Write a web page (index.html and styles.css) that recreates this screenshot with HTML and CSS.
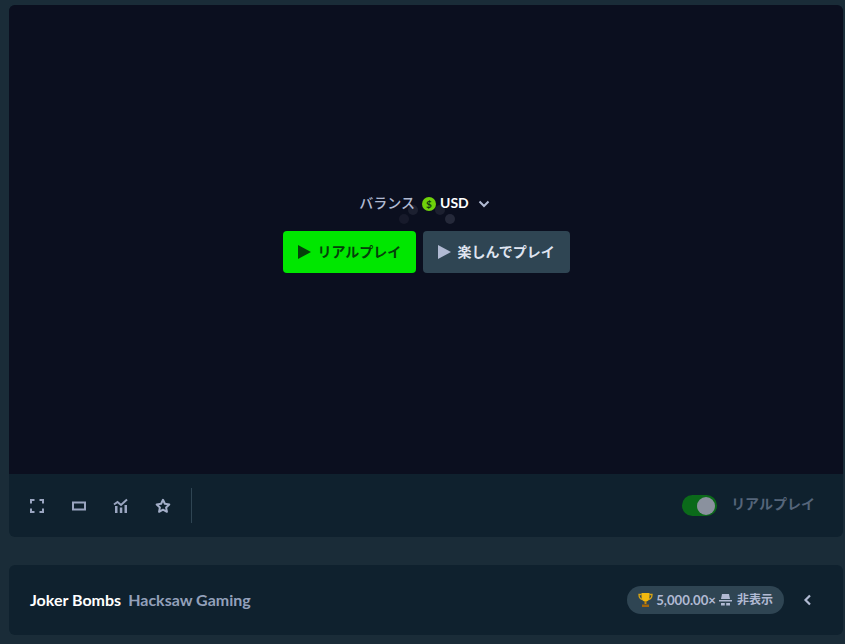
FILE: index.html
```html
<!DOCTYPE html>
<html lang="ja">
<head>
    <title>Joker Bombs</title>
    <link rel="stylesheet" href="styles.css">
</head>
<body>
    <div class="game-card">
        <div class="screen">
            <div class="spinner">
                <span class="dot dot-1"></span>
                <span class="dot dot-2"></span>
                <span class="dot dot-3"></span>
                <span class="dot dot-4"></span>
            </div>
            <div class="balance">
                <span class="balance-label">バランス</span>
                <span class="coin">$</span>
                <span class="currency">USD</span>
                <svg class="chevron" width="12" height="12" viewBox="0 0 12 12"><path d="M1.500 3.500L6 8l4.500-4.500" fill="none" stroke="#b1bad3" stroke-width="2"/></svg>
            </div>
            <div class="play-buttons">
                <button class="btn btn-real"><span class="tri tri-real"></span><span class="btn-text">リアルプレイ</span></button>
                <button class="btn btn-fun"><span class="tri tri-fun"></span><span class="btn-text">楽しんでプレイ</span></button>
            </div>
        </div>
        <div class="toolbar">
            <div class="tools">
                <svg class="tool" width="16" height="16" viewBox="0 0 16 16"><path d="M2 5.500V2h3.500M10.500 2H14v3.500M14 10.500V14h-3.500M5.500 14H2v-3.500" fill="none" stroke="#9aa5c0" stroke-width="2"/></svg>
                <svg class="tool" width="16" height="16" viewBox="0 0 16 16"><rect x="2" y="4.500" width="12" height="7" fill="none" stroke="#9aa5c0" stroke-width="2"/></svg>
                <svg class="tool" width="16" height="16" viewBox="0 0 16 16"><path d="M1 6.500l3.500-2.500 3.500 3 6-5.500" fill="none" stroke="#9aa5c0" stroke-width="2"/><path d="M2 8h2.500v7H2zM6.800 9.500h2.500V15H6.800zM11.500 7h2.500v8h-2.500z" fill="#9aa5c0"/></svg>
                <svg class="tool" width="16" height="16" viewBox="0 0 16 16"><path d="M8 1.800l1.900 4 4.400.6-3.200 3 .8 4.400L8 11.700l-3.900 2.100.8-4.400-3.200-3 4.400-.6z" fill="none" stroke="#a3aec8" stroke-width="2" stroke-linejoin="round"/></svg>
                <span class="divider"></span>
            </div>
            <div class="mode">
                <span class="switch"><span class="knob"></span></span>
                <span class="mode-label">リアルプレイ</span>
            </div>
        </div>
    </div>

    <div class="info-card">
        <div class="titles">
            <span class="game-name">Joker Bombs</span>
            <span class="provider">Hacksaw Gaming</span>
        </div>
        <div class="info-right">
            <div class="pill">
                <svg width="15" height="16" viewBox="0 0 15 16"><path d="M3.500 2.500H1c0 3 1 4.500 3.500 5M11.500 2.500H14c0 3-1 4.500-3.500 5" fill="none" stroke="#d9a514" stroke-width="1.300"/><path d="M3.500 1h8v4c0 3-1.800 4.500-4 4.500S3.500 8 3.500 5z" fill="#f2b90f"/><path d="M6.500 9h2v3h-2z" fill="#c98a0a"/><path d="M4 12.500h7V15H4z" fill="#a5660a"/></svg>
                <span class="multiplier">5,000.00×</span>
                <svg class="hat" width="13" height="12" viewBox="0 0 13 12"><path d="M3 0h7l1 5H2z" fill="#b1bad3"/><path d="M0 6h13v1.500H0z" fill="#b1bad3"/><path d="M2 9h3.800v2.500H2zM7.200 9H11v2.500H7.200z" fill="#b1bad3"/></svg>
                <span class="hidden-label">非表示</span>
            </div>
            <svg class="back" width="12" height="12" viewBox="0 0 12 12"><path d="M8 1.500L3.500 6 8 10.500" fill="none" stroke="#b1bad3" stroke-width="2.200"/></svg>
        </div>
    </div>
</body>
</html>
```

FILE: styles.css
```css
html, body {
    height: 100%;
}
body {
    margin: 0;
    padding: 5px 2px 0 9px;
    box-sizing: border-box;
    overflow: hidden;
    background-color: #1a2c38;
    font-family: Lato, "Noto Sans CJK JP", sans-serif;
    font-weight: 700;
}
.game-card {
    border-radius: 6px;
    overflow: hidden;
    background-color: #0f212e;
}
.screen {
    position: relative;
    height: 469px;
    background-color: #0b0f1f;
    display: flex;
    flex-direction: column;
    align-items: center;
    padding-top: 187px;
    box-sizing: border-box;
}
.spinner {
    position: absolute;
    left: 390px;
    top: 200px;
    width: 60px;
    height: 24px;
}
.dot {
    position: absolute;
    width: 10px;
    height: 10px;
    border-radius: 50%;
    background-color: #1c2030;
}
.dot-1 { left: 0; top: 9px; opacity: .7; }
.dot-2 { left: 9px; top: 0; }
.dot-3 { left: 36px; top: 0; }
.dot-4 { left: 46px; top: 9px; background-color: #25293a; }
.balance {
    position: relative;
    left: -1.500px;
    display: flex;
    align-items: center;
    height: 20px;
    font-size: 14px;
    color: #fff;
}
.balance-label {
    color: #b1bad3;
    font-weight: 500;
    font-size: 14px;
    margin-right: 7px;
}
.coin {
    width: 14px;
    height: 14px;
    margin-top: 3px;
    border-radius: 50%;
    background-color: #6fd20a;
    color: #0f3d10;
    font-size: 10px;
    line-height: 14px;
    text-align: center;
    margin-right: 4px;
}
.chevron {
    margin-left: 9px;
    margin-top: 3px;
}
.play-buttons {
    position: relative;
    display: flex;
    gap: 7px;
    margin-top: 19px;
}
.btn {
    display: flex;
    align-items: center;
    height: 42px;
    padding: 0;
    border: none;
    border-radius: 4px;
    font-family: inherit;
    font-weight: 600;
    font-size: 14px;
}
.btn-text {
    margin-top: -2px;
}
.btn-real {
    width: 133px;
    padding-left: 15px;
    background-color: #00e700;
    color: #05400a;
}
.btn-fun {
    width: 147px;
    padding-left: 15px;
    background-color: #2f4553;
    color: #dfe4f0;
}
.tri {
    width: 0;
    height: 0;
    margin-right: 7px;
    border-style: solid;
    border-width: 7px 0 7px 13px;
    border-color: transparent;
}
.tri-real {
    border-left-color: #05400a;
}
.tri-fun {
    border-left-color: #b1bad3;
}
.toolbar {
    display: flex;
    align-items: center;
    justify-content: space-between;
    height: 63px;
    padding: 0 28px 0 20px;
}
.tools {
    display: flex;
    align-items: center;
    gap: 26px;
}
.divider {
    width: 1px;
    height: 35px;
    margin-left: -6px;
    background-color: #2f4553;
}
.mode {
    display: flex;
    align-items: center;
    gap: 14px;
}
.switch {
    display: flex;
    align-items: center;
    justify-content: flex-end;
    width: 35px;
    height: 21px;
    padding-right: 2px;
    box-sizing: border-box;
    border-radius: 11px;
    background-color: #0b6a1a;
}
.knob {
    width: 18px;
    height: 18px;
    border-radius: 50%;
    background-color: #8a919e;
}
.mode-label {
    position: relative;
    top: -3px;
    font-size: 14px;
    font-weight: 600;
    color: #55657a;
}
.info-card {
    display: flex;
    align-items: center;
    justify-content: space-between;
    height: 70px;
    margin-top: 28px;
    padding: 0 29px 0 21px;
    border-radius: 6px;
    background-color: #0f212e;
}
.titles {
    display: flex;
    gap: 7px;
    font-size: 16px;
    margin-top: -2px;
}
.game-name {
    color: #fff;
}
.provider {
    color: #93a0ba;
}
.info-right {
    display: flex;
    align-items: center;
    gap: 18px;
}
.pill {
    display: flex;
    align-items: center;
    gap: 3px;
    height: 28px;
    padding: 0 11px;
    border-radius: 14px;
    background-color: #2f4553;
    color: #b1bad3;
    font-size: 12px;
}
.multiplier {
    font-size: 13.200px;
}
.hat {
    margin: 0 2px 0 0;
}
.hidden-label {
    margin-top: -3px;
}
```
